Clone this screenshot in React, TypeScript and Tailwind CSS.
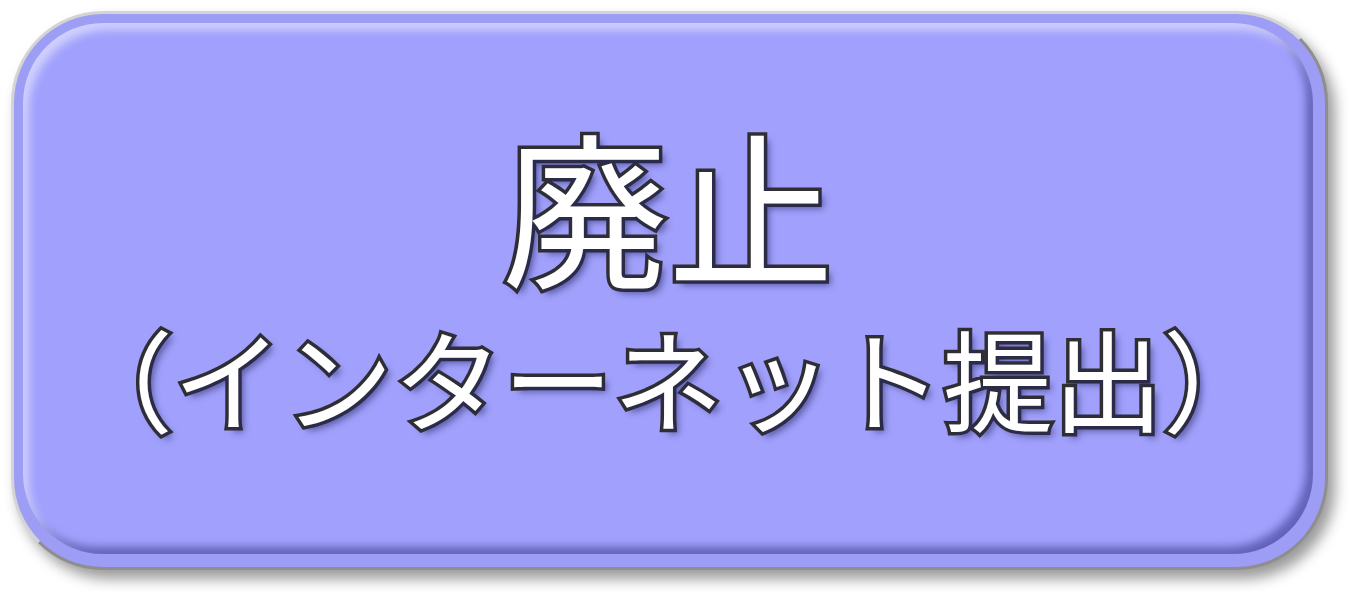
export default function App() {
  const textFx =
    "text-white font-['Noto_Sans_CJK_JP',sans-serif] font-normal leading-none [-webkit-text-stroke:7px_#2f2f33] [paint-order:stroke_fill] [text-shadow:5px_5px_7px_rgba(40,40,100,0.6)]";

  return (
    <div className="w-[1358px] h-[601px] bg-white pl-[11px] pt-[11px]">
      {/* outer frame */}
      <div className="w-[1317px] h-[559px] rounded-[92px] border-[3px] border-[#d4d4d4] border-r-[#8e8e8e] border-b-[#8e8e8e] bg-[#9d9df6] pl-[9px] pt-[9px] pr-[12px] pb-[13px] shadow-[7px_9px_14px_rgba(0,0,0,0.4)]">
        {/* button face */}
        <div className="w-full h-full rounded-[80px] bg-[#a1a1fd] flex flex-col items-center pt-[97px] shadow-[inset_6px_7px_9px_rgba(255,255,255,0.5),inset_-7px_-7px_8px_rgba(45,45,130,0.55)]">
          <div className={`${textFx} text-[166px]`}>廃止</div>
          <div className={`${textFx} text-[110px] mt-[35px]`}>（インターネット提出）</div>
        </div>
      </div>
    </div>
  );
}
